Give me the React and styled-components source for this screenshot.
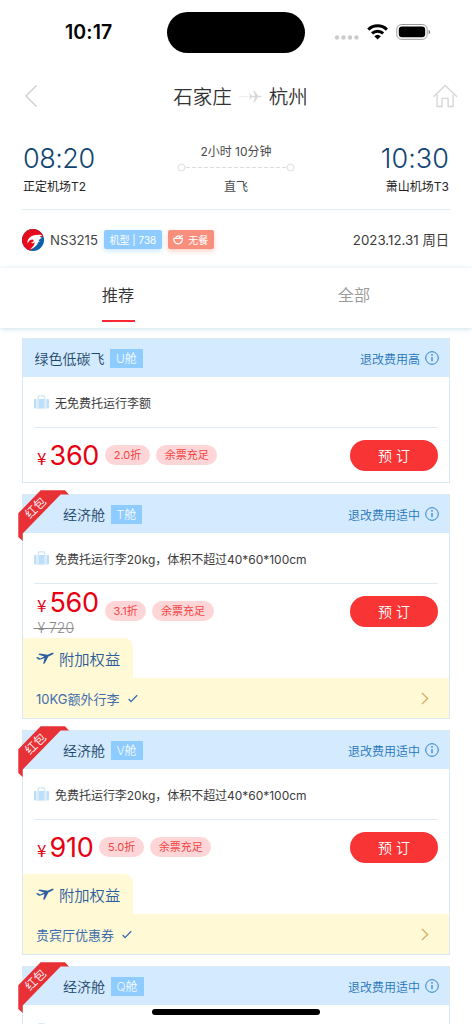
import React from "react";
import styled, { createGlobalStyle, css } from "styled-components";

const GlobalStyle = createGlobalStyle`
  * { box-sizing: border-box; }
  body {
    margin: 0;
    background: #fff;
    font-family: Inter, "Noto Sans CJK SC", sans-serif;
    font-weight: 400;
    color: #444;
  }
  svg { display: block; flex: none; }
`;

const Screen = styled.div`
  position: relative;
  width: 472px;
  height: 1024px;
  overflow: hidden;
  background: #fff;
  white-space: nowrap;
`;

const StatusBar = styled.div`
  height: 66px;
  padding: 12px 0 0 65px;
  display: flex;
  align-items: flex-start;
`;

const Clock = styled.div`
  width: 102px;
  line-height: 41px;
  font-size: 19.5px;
  font-weight: 600;
  letter-spacing: 0.1px;
  color: #000;
`;

const Island = styled.div`
  width: 138px;
  height: 41px;
  border-radius: 21px;
  background: #000;
`;

const StatusIcons = styled.div`
  margin-left: 29px;
  height: 41px;
  display: flex;
  align-items: center;
`;

const NavBar = styled.header`
  height: 60px;
  padding: 0 14px 0 24px;
  display: flex;
  align-items: center;
  justify-content: space-between;
`;

const RouteTitle = styled.h1`
  margin: 1px 0 0 11px;
  display: flex;
  align-items: center;
  gap: 7px;
  font-size: 19.5px;
  font-weight: 350;
  line-height: 30px;
  color: #333;
`;

const Itinerary = styled.section`
  height: 84px;
  margin: 0 22px;
  padding-top: 16px;
  display: flex;
  justify-content: space-between;
  border-bottom: 1px solid #e1eef4;
`;

const Stop = styled.div`
  width: 120px;
  text-align: ${(p) => p.$align};
  padding: 0 1px;
`;

const StopTime = styled.div`
  height: 34px;
  line-height: 34px;
  font-size: 27px;
  font-weight: 300;
  letter-spacing: ${(p) => (p.$wide ? "0.05px" : "-0.5px")};
  color: #0f4474;
`;

const StopName = styled.div`
  line-height: 22px;
  font-size: 12px;
  color: #222;
`;

const Leg = styled.div`
  width: 120px;
  padding-top: 1px;
  display: flex;
  flex-direction: column;
  align-items: center;
  font-size: 12px;
  line-height: 18px;
  color: #4a4a4a;
`;

const LegLine = styled.svg`
  margin: 2px 0 6px;
`;

const FlightRow = styled.section`
  height: 58px;
  padding: 1px 23px 0 22px;
  display: flex;
  align-items: center;
`;

const FlightNo = styled.span`
  margin: 0 6px;
  width: 48px;
  font-size: 13.2px;
  color: #444;
`;

const FlightTag = styled.span`
  height: 19px;
  margin-right: 6px;
  padding: 0 5.5px;
  display: inline-flex;
  align-items: center;
  gap: 4px;
  border-radius: 2px;
  font-size: 10px;
  color: #fff;
  background: ${(p) => p.$bg};
  box-shadow: 0 2px 5px ${(p) => p.$glow};
`;

const FlightDate = styled.span`
  margin-left: auto;
  font-size: 13.3px;
  color: #3a3a3a;
`;

const Tabs = styled.nav`
  height: 60px;
  display: flex;
  box-shadow: 0 1px 5px rgba(90, 160, 190, 0.32);
`;

const Tab = styled.div`
  flex: 1;
  display: flex;
  flex-direction: column;
  align-items: center;
  padding-top: 13px;
  font-size: 16.2px;
  font-weight: 350;
  line-height: 28px;
  color: ${(p) => (p.$active ? "#333" : "#999")};
  &::after {
    content: "";
    width: 33px;
    height: 2px;
    margin-top: 11px;
    background: ${(p) => (p.$active ? "#fa2a35" : "transparent")};
  }
`;

const FareList = styled.main`
  padding: 10px 22px 0;
  display: flex;
  flex-direction: column;
  gap: 11px;
`;

const Card = styled.article`
  position: relative;
  flex: none;
  border: 1px solid #d8e9f2;
  background: #fff;
`;

const CardHead = styled.div`
  height: 38px;
  padding: 0 10px 0 ${(p) => (p.$ribbon ? "40px" : "11.5px")};
  display: flex;
  align-items: center;
  background: #d4ebff;
`;

const CabinName = styled.span`
  font-size: 14px;
  font-weight: 350;
  color: #1c4769;
`;

const CabinTag = styled.span`
  margin-left: 5.5px;
  height: 19px;
  padding: 0 6px;
  line-height: 19px;
  font-size: 12px;
  font-weight: 350;
  color: #f2faff;
  background: #8eccff;
`;

const Rules = styled.span`
  margin-left: auto;
  display: flex;
  align-items: center;
  gap: 5px;
  font-size: 12px;
  font-weight: 350;
  color: #1f74ba;
`;

const Baggage = styled.div`
  height: 51px;
  margin: 0 11px;
  padding-top: 1px;
  display: flex;
  align-items: center;
  gap: 6px;
  border-bottom: 1px solid #dfebf3;
  font-size: 12px;
  letter-spacing: ${(p) => (p.$tight ? "-0.03px" : "0")};
  color: #3c3c3c;
`;

const FareRow = styled.div`
  height: 54px;
  padding: 0 11px 0 14px;
  display: flex;
  align-items: center;
`;

const PriceBlock = styled.div`
  position: relative;
  display: flex;
  align-items: baseline;
  color: #e60012;
  line-height: 34px;
  padding-top: 4px;
  ${(p) => p.$raised && css`padding-bottom: 19px;`}
`;

const Currency = styled.span`
  width: 12.5px;
  font-size: 17px;
  font-family: "Noto Sans CJK SC", sans-serif;
`;

const Amount = styled.span`
  font-size: 27px;
  letter-spacing: -0.3px;
`;

const OldPrice = styled.s`
  position: absolute;
  left: -3.5px;
  top: 36px;
  line-height: 20px;
  font-size: 14px;
  font-weight: 350;
  color: #888;
`;

const Pill = styled.span`
  height: 20px;
  margin-left: 6px;
  padding: 0 8.7px;
  border-radius: 10px;
  line-height: 20.5px;
  font-size: 11px;
  color: #f54545;
  background: #ffd6d7;
`;

const BookButton = styled.button`
  margin-left: auto;
  width: 88px;
  height: 31px;
  padding: 0;
  border: 0;
  border-radius: 16px;
  background: #f83434;
  color: #fff;
  font: 350 14px Inter, "Noto Sans CJK SC", sans-serif;
`;

const PerksTab = styled.div`
  width: 110px;
  height: 40px;
  padding-left: 13px;
  display: flex;
  align-items: center;
  gap: 5px;
  border-top-right-radius: 9px;
  background: #fff9d6;
  font-size: 15.3px;
  font-weight: 350;
  color: #2b5d9c;
`;

const PerksRow = styled.div`
  height: 40px;
  padding: 0 20px 0 13px;
  display: flex;
  align-items: center;
  background: #fff9d6;
  font-size: 13px;
  color: #3e6dac;
`;

const PerkCheck = styled.svg`
  margin-left: 8px;
`;

const PerkArrow = styled.svg`
  margin-left: auto;
`;

const RibbonMark = styled.svg`
  position: absolute;
  left: -5px;
  top: -5px;
`;

const HomeIndicator = styled.div`
  position: absolute;
  left: 152px;
  top: 1009px;
  width: 168px;
  height: 6px;
  border-radius: 3px;
  background: #000;
`;

function SignalIcons() {
  return (
    <StatusIcons>
      <svg width="97" height="20" viewBox="0 0 97 20">
        <g fill="#ccc">
          <circle cx="3" cy="14.5" r="2.2" />
          <circle cx="9.5" cy="14.5" r="2.2" />
          <circle cx="16" cy="14.5" r="2.2" />
          <circle cx="22.5" cy="14.5" r="2.2" />
        </g>
        <g fill="none" stroke="#000" strokeWidth="3">
          <path d="M34.3 6.6a13.4 13.4 0 0 1 18.6 0" />
          <path d="M38 10.4a8.1 8.1 0 0 1 11.2 0" />
        </g>
        <path d="M40.3 13.3a4.9 4.9 0 0 1 6.6 0l-3.3 3.3z" fill="#000" />
        <rect x="62.8" y="1.5" width="30.4" height="14.8" rx="4.7" fill="none" stroke="#999" />
        <rect x="64.8" y="3.5" width="26.4" height="10.8" rx="3.2" fill="#000" />
        <path d="M94.7 6.7v4.6c2-1 2-3.6 0-4.6z" fill="#777" />
      </svg>
    </StatusIcons>
  );
}

function BackIcon() {
  return (
    <svg width="14" height="24" viewBox="0 0 14 24" fill="none" stroke="#c9c9c9" strokeWidth="1.2">
      <path d="M12.5 1.5 2 12l10.5 10.5" />
    </svg>
  );
}

function HomeIcon() {
  return (
    <svg width="26" height="24" viewBox="0 0 26 24" fill="none" stroke="#d6d6d6" strokeWidth="1.3">
      <path d="M1.5 12.8 13.2 1.5 25 12.8M5.1 10.5v12h5v-8.2h6v8.2h5V10.5" />
    </svg>
  );
}

function RoutePlane() {
  return (
    <svg width="23" height="14" viewBox="0 0 23 14">
      <path d="M0 6.5h13" stroke="#eee" />
      <path d="M11 5.8 10 3.7h1l2 2h3L14.3.7h1.3l3.4 5h2.3c1.6 0 1.6 1.6 0 1.6H19l-3.4 5h-1.3l1.7-5h-3l-2 2h-1l1-2.2z" fill="#d9d9d9" />
    </svg>
  );
}

function AirlineLogo() {
  return (
    <svg width="22" height="22" viewBox="0 0 22 22">
      <circle cx="11" cy="11" r="11" fill="#0860ae" />
      <path d="M8 21.6A11 11 0 1 1 21.2 6.9C17 8.5 16.5 12 14 16c-1.5 2.5-3.5 4.4-6 5.6z" fill="#e60b1c" />
      <path
        d="M20.2 6.2C15 5.2 9.7 6.4 7.2 9c-1.6 1.7-2.2 3.7-1.5 5.4 1.1-2.8 2.7-4.1 4.7-4 1.5.2 1.6 1.5.6 2.3-.8.7-1.6.9-2.4.8 1.1 1.2 2.9 1 4.1-.3-.1 2.4-1.7 4.8-4.7 7 4.3-1 7.200-3.800 8.300-7.300l2.100-.7-1.800-.2c.2-.8.500-1.300 1.100-1.700l1.900-.5-1.500-.3c.5-.6 1.200-1 2.100-1.300l-2.600-.1c.7-.7 1.500-1.200 2.600-1.500z"
        fill="#fff"
      />
    </svg>
  );
}

function MealIcon() {
  return (
    <svg width="11" height="11" viewBox="0 0 11 11" fill="none" stroke="#fff" strokeWidth="1.2">
      <path d="M.8 4.3h8.6c.2 3-1.5 5.6-4.3 5.6S.6 7.3.8 4.3zM2.6 4.2c.3-2.3 3.2-3 5-1.3M6 3.8 9.8 1.2" />
    </svg>
  );
}

function InfoIcon() {
  return (
    <svg width="14" height="14" viewBox="0 0 14 14" fill="none" stroke="#2b7fc2">
      <circle cx="7" cy="7" r="6.3" />
      <path d="M7 5.9v4.4" strokeWidth="1.2" />
      <circle cx="7" cy="3.9" r=".8" fill="#2b7fc2" stroke="none" />
    </svg>
  );
}

const Suitcase = styled.svg`
  margin-bottom: 1px;
`;

function SuitcaseIcon() {
  return (
    <Suitcase width="15" height="14" viewBox="0 0 15 14">
      <path d="M4.4 4V1.6q0-.8.8-.8h4.6q.8 0 .8.8V4" fill="none" stroke="#cfe6f8" strokeWidth="1.2" />
      <path d="M1 4h1.6v9.6H1q-1 0-1-1V5q0-1 1-1zM12.4 4H14q1 0 1 1v7.6q0 1-1 1h-1.6z" fill="#bfdff8" />
      <path d="M3.4 4h8.2v9.6H3.4z" fill="#bfdff8" />
      <path d="M4.3 4v9.6M10.7 4v9.6" stroke="#dbeefc" />
    </Suitcase>
  );
}

function PerkPlane() {
  return (
    <svg width="18" height="12" viewBox="0 0 18 12">
      <path d="M.1 5.4 1.6 5l2.6 1.4 4-1.9-6.1-2L3.7 1.6l8 1.1L15 1.2c1.7-.8 3.1-.5 2.5.4-.3.5-1 1-2.4 1.7l-2.7 1.2-3.7 7-1.6.3 1.5-5.9-4 1.7c-1.3.5-2.1.2-2.8-.5z" fill="#2c5fa2" />
    </svg>
  );
}

function Ribbon() {
  return (
    <RibbonMark width="52" height="53" viewBox="0 0 52 53">
      <path d="M22.7.2H47l3.9 4.4h-8.3L4.7 43.4v7.7L.3 47V23.3z" fill="#e73137" />
      <text
        x="17.7"
        y="18"
        transform="rotate(-45 17.7 18)"
        dy="4"
        textAnchor="middle"
        fontSize="12"
        fontWeight="350"
        fill="#fff"
        fontFamily='"Noto Sans CJK SC", sans-serif'
      >
        红包
      </text>
    </RibbonMark>
  );
}

function Perks({ label }) {
  return (
    <>
      <PerksTab>
        <PerkPlane />
        附加权益
      </PerksTab>
      <PerksRow>
        {label}
        <PerkCheck width="10" height="9" viewBox="0 0 10 9" fill="none" stroke="#326baf" strokeWidth="1.3">
          <path d="M.7 5 3 7.6 9.2 1.2" />
        </PerkCheck>
        <PerkArrow width="8" height="13" viewBox="0 0 8 13" fill="none" stroke="#d8ad62" strokeWidth="1.3">
          <path d="m1 1 5.6 5.5L1 12" />
        </PerkArrow>
      </PerksRow>
    </>
  );
}

function FareCard({ name, cabin, rules, baggage, price, oldPrice, discount, perk, ribbon }) {
  return (
    <Card>
      <CardHead $ribbon={ribbon}>
        <CabinName>{name}</CabinName>
        <CabinTag>{cabin}</CabinTag>
        <Rules>
          {rules}
          <InfoIcon />
        </Rules>
      </CardHead>
      <Baggage $tight={ribbon}>
        <SuitcaseIcon />
        {baggage}
      </Baggage>
      {price && (
        <FareRow>
          <PriceBlock $raised={Boolean(oldPrice)}>
            <Currency>¥</Currency>
            <Amount>{price}</Amount>
            {oldPrice && <OldPrice>&nbsp;¥ {oldPrice}</OldPrice>}
          </PriceBlock>
          <Pill>{discount}</Pill>
          <Pill>余票充足</Pill>
          <BookButton>预 订</BookButton>
        </FareRow>
      )}
      {perk && <Perks label={perk} />}
      {ribbon && <Ribbon />}
    </Card>
  );
}

const allowance = "免费托运行李20kg，体积不超过40*60*100cm";

const fares = [
  { name: "绿色低碳飞", cabin: "U舱", rules: "退改费用高", baggage: "无免费托运行李额", price: "360", discount: "2.0折" },
  { name: "经济舱", cabin: "T舱", rules: "退改费用适中", baggage: allowance, price: "560", oldPrice: "720", discount: "3.1折", perk: "10KG额外行李", ribbon: true },
  { name: "经济舱", cabin: "V舱", rules: "退改费用适中", baggage: allowance, price: "910", discount: "5.0折", perk: "贵宾厅优惠券", ribbon: true },
  { name: "经济舱", cabin: "Q舱", rules: "退改费用适中", ribbon: true },
];

export default function App() {
  return (
    <>
      <GlobalStyle />
      <Screen>
        <StatusBar>
          <Clock>10:17</Clock>
          <Island />
          <SignalIcons />
        </StatusBar>
        <NavBar>
          <BackIcon />
          <RouteTitle>
            石家庄
            <RoutePlane />
            杭州
          </RouteTitle>
          <HomeIcon />
        </NavBar>
        <Itinerary>
          <Stop $align="left">
            <StopTime>08:20</StopTime>
            <StopName>正定机场T2</StopName>
          </Stop>
          <Leg>
            2小时 10分钟
            <LegLine width="118" height="9" viewBox="0 0 118 9" fill="none" stroke="#ddd">
              <circle cx="4.5" cy="4.5" r="3.5" />
              <circle cx="113.5" cy="4.5" r="3.5" />
              <path d="M9 4.5h100" strokeDasharray="4 2" />
            </LegLine>
            直飞
          </Leg>
          <Stop $align="right">
            <StopTime $wide>10:30</StopTime>
            <StopName>萧山机场T3</StopName>
          </Stop>
        </Itinerary>
        <FlightRow>
          <AirlineLogo />
          <FlightNo>NS3215</FlightNo>
          <FlightTag $bg="#8eccff" $glow="rgba(142, 204, 255, 0.45)">机型 | 738</FlightTag>
          <FlightTag $bg="#f88f7c" $glow="rgba(248, 143, 124, 0.45)">
            <MealIcon />
            无餐
          </FlightTag>
          <FlightDate>2023.12.31 周日</FlightDate>
        </FlightRow>
        <Tabs>
          <Tab $active>推荐</Tab>
          <Tab>全部</Tab>
        </Tabs>
        <FareList>
          {fares.map((fare) => (
            <FareCard key={fare.cabin} {...fare} />
          ))}
        </FareList>
        <HomeIndicator />
      </Screen>
    </>
  );
}
